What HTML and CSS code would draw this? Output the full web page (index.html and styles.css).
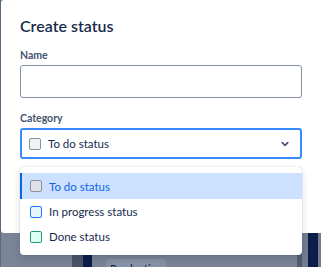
FILE: index.html
```html
<!DOCTYPE html>
<html lang="en">
<head>
  <meta charset="UTF-8">
  <title>Create status</title>
  <link rel="stylesheet" href="styles.css">
</head>
<body>
  <div class="behind">
    <div class="edge"></div>
    <div class="gap-left"></div>
    <div class="col-dark"></div>
    <div class="col-navy"></div>
    <div class="board">
      <span class="chip">Production</span>
    </div>
    <div class="col-dark2"></div>
    <div class="col-gray"></div>
    <div class="col-navy2"></div>
    <div class="col-rest"></div>
  </div>

  <div class="modal">
    <h2 class="title">Create status</h2>
    <form class="form">
      <div class="field">
        <label for="statusName">Name</label>
        <input type="text" id="statusName" class="text-input">
      </div>
      <div class="field">
        <label>Category</label>
        <div class="select">
          <span class="lozenge todo"></span>
          <span class="select-value">To do status</span>
          <svg class="chevron" width="10" height="10" viewBox="0 0 10 10">
            <path d="M2.2 3.6 L5 6.4 L7.8 3.6" fill="none" stroke="#44546f" stroke-width="1.6" stroke-linecap="round" stroke-linejoin="round"/>
          </svg>
        </div>
      </div>
    </form>
  </div>

  <ul class="menu">
    <li class="option selected"><span class="lozenge todo"></span>To do status</li>
    <li class="option"><span class="lozenge progress"></span>In progress status</li>
    <li class="option"><span class="lozenge done"></span>Done status</li>
  </ul>
</body>
</html>
```

FILE: styles.css
```css
body {
  margin: 0;
  width: 321px;
  height: 267px;
  overflow: hidden;
  background: #7a8597;
  font-family: Lato, "Noto Sans", sans-serif;
  color: #172b4d;
  position: relative;
}

/* dimmed page behind the modal */
.behind {
  display: flex;
  height: 267px;
}
.edge {
  width: 1px;
  background: #5c6a80;
}
.gap-left {
  width: 71px;
}
.col-dark {
  width: 11px;
  background: #4b5467;
}
.col-navy {
  width: 9px;
  background: #0b1d48;
}
.board {
  width: 205px;
  padding: 257px 0 0 14px;
  box-sizing: border-box;
}
.chip {
  display: inline-block;
  width: 60px;
  height: 20px;
  padding: 3px 4px;
  box-sizing: border-box;
  background: #8893a6;
  border-radius: 3px;
  font-size: 11px;
  color: #0b1d48;
}
.col-dark2 {
  width: 5px;
  background: #535d70;
}
.col-gray {
  width: 6px;
  background: #727d90;
}
.col-navy2 {
  width: 10px;
  background: #0b1d48;
}
.col-rest {
  flex: 1;
  background: #727d90;
}

.modal {
  position: absolute;
  left: 1px;
  top: 0;
  width: 340px;
  height: 233px;
  background: #fff;
  border-radius: 3px;
  padding: 14px 20px 0 19px;
  box-sizing: border-box;
}
.title {
  margin: 0;
  font-size: 16px;
  font-weight: 600;
  line-height: 24px;
}
.form {
  display: flex;
  flex-direction: column;
  gap: 13px;
  margin-top: 10px;
}
.field label {
  display: block;
  font-size: 10.5px;
  font-weight: 700;
  color: #44546f;
  line-height: 14px;
  margin-bottom: 3px;
}
.text-input {
  display: block;
  width: 282px;
  height: 33px;
  box-sizing: border-box;
  border: 1px solid #8590a2;
  border-radius: 3px;
  margin: 0;
  padding: 0 8px;
}
.select {
  display: flex;
  align-items: center;
  width: 282px;
  height: 31px;
  box-sizing: border-box;
  border: 2px solid #388bff;
  border-radius: 3px;
  padding: 0 10px 0 7px;
  font-size: 11.5px;
}
.select-value {
  flex: 1;
  margin-left: 7px;
}
.lozenge {
  display: inline-block;
  width: 12px;
  height: 12px;
  box-sizing: border-box;
  border: 1.5px solid #8590a2;
  border-radius: 2px;
  background: #f1f2f4;
}
.lozenge.progress {
  border-color: #1d7afc;
  background: #e9f2ff;
}
.lozenge.done {
  border-color: #22a06b;
  background: #dcfff1;
}

.menu {
  position: absolute;
  left: 20px;
  top: 167px;
  width: 282px;
  margin: 0;
  padding: 6px 0;
  list-style: none;
  background: #fff;
  border-radius: 4px;
  box-shadow: 0 4px 8px rgba(9, 30, 66, 0.15), 0 0 1px rgba(9, 30, 66, 0.31);
  font-size: 11.5px;
}
.option {
  display: flex;
  align-items: center;
  gap: 7px;
  height: 25px;
  padding-left: 8px;
  border-left: 2px solid transparent;
}
.option.selected {
  height: 26px;
  background: #cce0ff;
  border-left-color: #0c66e4;
  color: #0c66e4;
}
.option.selected .lozenge {
  background: #dfe1e6;
}
```
